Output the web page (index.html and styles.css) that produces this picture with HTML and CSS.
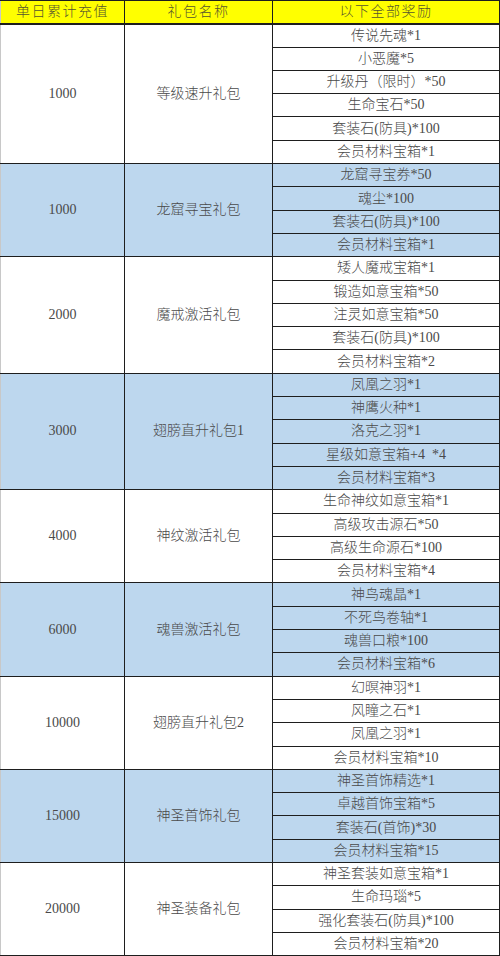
FILE: index.html
```html
<!DOCTYPE html>
<html lang="zh">
<head>
<meta charset="utf-8">
<link rel="stylesheet" href="styles.css">
</head>
<body>
<table class="rewards">
  <colgroup><col class="c1"><col class="c2"><col class="c3"></colgroup>
  <thead>
    <tr class="head"><th>单日累计充值</th><th>礼包名称</th><th>以下全部奖励</th></tr>
  </thead>
  <tbody class="white">
    <tr><td rowspan="6">1000</td><td rowspan="6">等级速升礼包</td><td>传说先魂*1</td></tr>
    <tr><td>小恶魔*5</td></tr>
    <tr><td>升级丹（限时）*50</td></tr>
    <tr><td>生命宝石*50</td></tr>
    <tr><td>套装石(防具)*100</td></tr>
    <tr><td>会员材料宝箱*1</td></tr>
  </tbody>
  <tbody class="blue">
    <tr><td rowspan="4">1000</td><td rowspan="4">龙窟寻宝礼包</td><td>龙窟寻宝券*50</td></tr>
    <tr><td>魂尘*100</td></tr>
    <tr><td>套装石(防具)*100</td></tr>
    <tr><td>会员材料宝箱*1</td></tr>
  </tbody>
  <tbody class="white">
    <tr><td rowspan="5">2000</td><td rowspan="5">魔戒激活礼包</td><td>矮人魔戒宝箱*1</td></tr>
    <tr><td>锻造如意宝箱*50</td></tr>
    <tr><td>注灵如意宝箱*50</td></tr>
    <tr><td>套装石(防具)*100</td></tr>
    <tr><td>会员材料宝箱*2</td></tr>
  </tbody>
  <tbody class="blue">
    <tr><td rowspan="5">3000</td><td rowspan="5">翅膀直升礼包1</td><td>凤凰之羽*1</td></tr>
    <tr><td>神鹰火种*1</td></tr>
    <tr><td>洛克之羽*1</td></tr>
    <tr><td>星级如意宝箱+4&nbsp;&nbsp;*4</td></tr>
    <tr><td>会员材料宝箱*3</td></tr>
  </tbody>
  <tbody class="white">
    <tr><td rowspan="4">4000</td><td rowspan="4">神纹激活礼包</td><td>生命神纹如意宝箱*1</td></tr>
    <tr><td>高级攻击源石*50</td></tr>
    <tr><td>高级生命源石*100</td></tr>
    <tr><td>会员材料宝箱*4</td></tr>
  </tbody>
  <tbody class="blue">
    <tr><td rowspan="4">6000</td><td rowspan="4">魂兽激活礼包</td><td>神鸟魂晶*1</td></tr>
    <tr><td>不死鸟卷轴*1</td></tr>
    <tr><td>魂兽口粮*100</td></tr>
    <tr><td>会员材料宝箱*6</td></tr>
  </tbody>
  <tbody class="white">
    <tr><td rowspan="4">10000</td><td rowspan="4">翅膀直升礼包2</td><td>幻暝神羽*1</td></tr>
    <tr><td>风瞳之石*1</td></tr>
    <tr><td>凤凰之羽*1</td></tr>
    <tr><td>会员材料宝箱*10</td></tr>
  </tbody>
  <tbody class="blue">
    <tr><td rowspan="4">15000</td><td rowspan="4">神圣首饰礼包</td><td>神圣首饰精选*1</td></tr>
    <tr><td>卓越首饰宝箱*5</td></tr>
    <tr><td>套装石(首饰)*30</td></tr>
    <tr><td>会员材料宝箱*15</td></tr>
  </tbody>
  <tbody class="white">
    <tr><td rowspan="4">20000</td><td rowspan="4">神圣装备礼包</td><td>神圣套装如意宝箱*1</td></tr>
    <tr><td>生命玛瑙*5</td></tr>
    <tr><td>强化套装石(防具)*100</td></tr>
    <tr><td>会员材料宝箱*20</td></tr>
  </tbody>
</table>
</body>
</html>
```

FILE: styles.css
```css
html, body {
  margin: 0;
  padding: 0;
  background: #ffffff;
}

.rewards {
  width: 499px;
  border-collapse: collapse;
  table-layout: fixed;
  font-family: "Liberation Serif", "Noto Sans CJK SC", serif;
  font-size: 14px;
  font-weight: 300;
  color: #4a4a4a;
}

.c1 { width: 124px; }
.c2 { width: 148px; }
.c3 { width: 227px; }

.rewards th,
.rewards td {
  border: 1px solid #1e1e1e;
  padding: 0;
  text-align: center;
  vertical-align: middle;
  line-height: 20px;
  white-space: nowrap;
  font-weight: 300;
}

.rewards tr {
  height: 23.3px;
}

.head th {
  background: #ffff00;
  color: #55552e;
  letter-spacing: 1.5px;
  border-bottom: 2px solid #1e1e1e;
}

.blue td {
  background: #bdd7ee;
}

.white td {
  background: #ffffff;
}

.rewards td:first-child,
.rewards th:first-child {
  border-left: 1px solid #c8c8c8;
}
```
